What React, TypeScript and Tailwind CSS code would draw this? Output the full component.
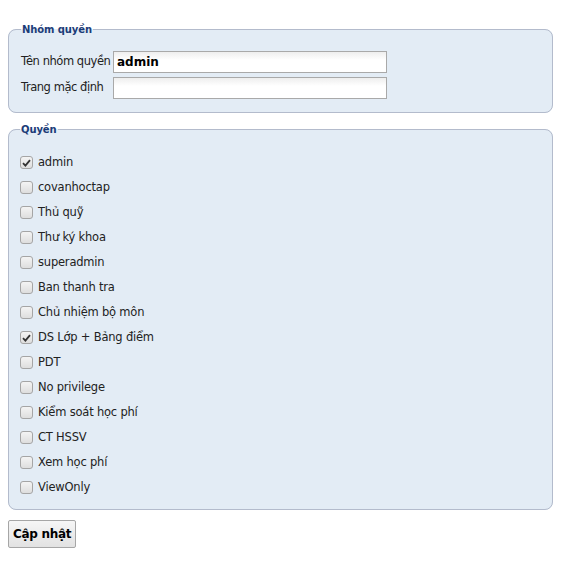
const PERMS = [
  { label: "admin", checked: true },
  { label: "covanhoctap", checked: false },
  { label: "Thủ quỹ", checked: false },
  { label: "Thư ký khoa", checked: false },
  { label: "superadmin", checked: false },
  { label: "Ban thanh tra", checked: false },
  { label: "Chủ nhiệm bộ môn", checked: false },
  { label: "DS Lớp + Bảng điểm", checked: true },
  { label: "PDT", checked: false },
  { label: "No privilege", checked: false },
  { label: "Kiểm soát học phí", checked: false },
  { label: "CT HSSV", checked: false },
  { label: "Xem học phí", checked: false },
  { label: "ViewOnly", checked: false },
];

function Box({ checked }: { checked: boolean }) {
  return (
    <span className="flex h-[13px] w-[13px] shrink-0 items-center justify-center rounded-[3px] border border-[#a5a5a5] bg-gradient-to-b from-[#f4f4f4] to-[#dedede]">
      {checked && (
        <svg width="9" height="8" viewBox="0 0 9 8">
          <path d="M1 4.2 L3.4 6.6 L8 1.2" stroke="#333" strokeWidth="1.8" fill="none" />
        </svg>
      )}
    </span>
  );
}

export default function App() {
  return (
    <div className="min-h-[562px] bg-white px-2 pt-[22px] font-['DejaVu_Sans',sans-serif] text-[11.5px] tracking-[-0.2px] text-[#222]">
      {/* Nhóm quyền */}
      <fieldset className="w-[545px] rounded-[8px] border border-[#b3bbcc] bg-[#e3ecf5] px-3 pb-[13px] pt-[14px]">
        <legend className="px-px text-[10px] font-bold tracking-[-0.1px] text-[#1b3c78]">Nhóm quyền</legend>
        <div className="flex flex-col gap-[4px]">
          <div className="flex items-center">
            <span className="mr-[3px] w-[89px] shrink-0 whitespace-nowrap tracking-[-0.45px]">Tên nhóm quyền</span>
            <input
              readOnly
              value="admin"
              className="h-[22px] w-[274px] border border-[#a9a9a9] bg-gradient-to-b from-[#eeeeee] to-white to-[40%] px-[3px] text-[12px] font-bold tracking-normal text-black outline-none"
            />
          </div>
          <div className="flex items-center">
            <span className="mr-[3px] w-[89px] shrink-0 whitespace-nowrap tracking-[-0.45px]">Trang mặc định</span>
            <input
              readOnly
              value=""
              className="h-[22px] w-[274px] border border-[#a9a9a9] bg-gradient-to-b from-[#eeeeee] to-white to-[40%] px-[3px] text-[12px] outline-none"
            />
          </div>
        </div>
      </fieldset>

      {/* Quyền */}
      <fieldset className="mt-[9px] w-[545px] rounded-[8px] border border-[#b3bbcc] bg-[#e3ecf5] px-[11px] pb-[9px] pt-[13px]">
        <legend className="px-px text-[10px] font-bold tracking-[-0.1px] text-[#1b3c78]">Quyền</legend>
        <div className="flex flex-col">
          {PERMS.map((p) => (
            <label key={p.label} className="flex h-[25px] items-center gap-[5px]">
              <Box checked={p.checked} />
              <span>{p.label}</span>
            </label>
          ))}
        </div>
      </fieldset>

      <button
        type="button"
        className="mt-[10px] h-[28px] rounded-[2px] border border-[#a6a6a6] bg-gradient-to-b from-[#f6f6f6] to-[#e2e2e2] px-[4px] text-[12px] font-bold tracking-[-0.3px] text-black"
      >
        Cập nhật
      </button>
    </div>
  );
}
